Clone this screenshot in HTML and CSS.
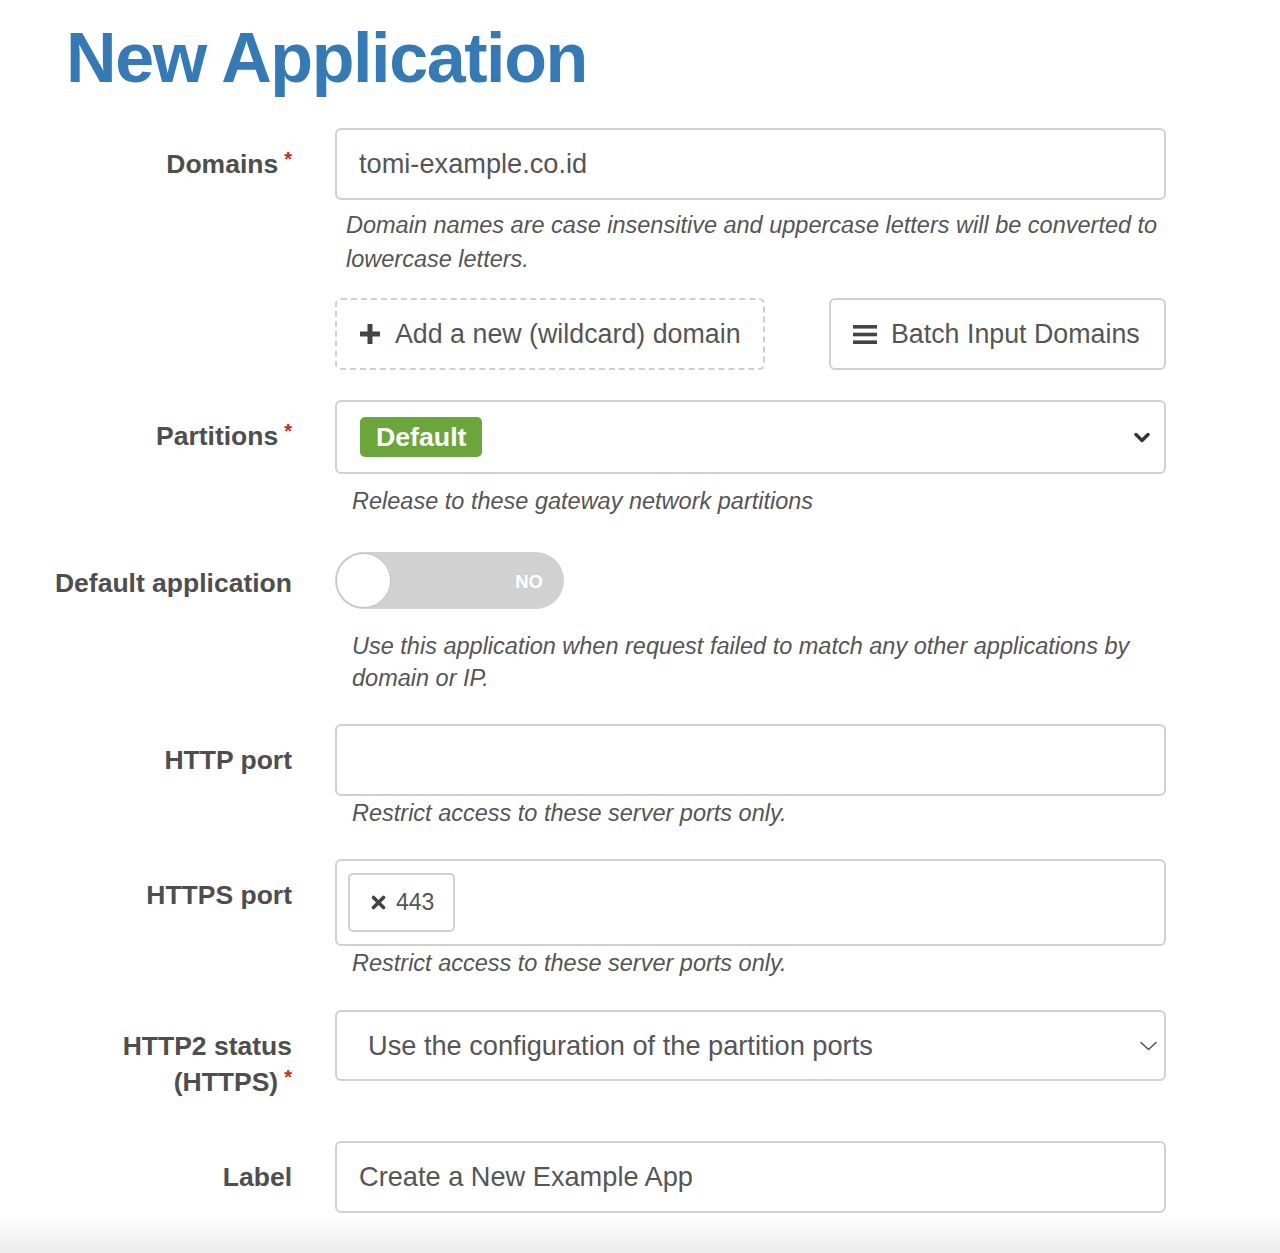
FILE: index.html
```html
<!DOCTYPE html>
<html lang="en">
<head>
<meta charset="utf-8">
<title>New Application</title>
<link rel="stylesheet" href="styles.css">
</head>
<body>
<h1 class="title">New Application</h1>
<form class="form">
  <div class="group g-domains">
    <div class="label">Domains<span class="req">*</span></div>
    <div class="control">
      <div class="input">tomi-example.co.id</div>
      <div class="help help-domain">Domain names are case insensitive and uppercase letters will be converted to lowercase letters.</div>
      <div class="btn-row">
        <div class="btn btn-add">
          <svg class="ico-plus" width="20" height="20" viewBox="0 0 20 20"><path d="M7.5 0h5v7.5H20v5h-7.5V20h-5v-7.5H0v-5h7.5z" fill="#444"/></svg>
          <span>Add a new (wildcard) domain</span>
        </div>
        <div class="btn btn-batch">
          <svg class="ico-bars" width="24" height="19" viewBox="0 0 24 19"><rect x="0" y="0" width="24" height="3.6" fill="#444"/><rect x="0" y="7.7" width="24" height="3.6" fill="#444"/><rect x="0" y="15.4" width="24" height="3.6" fill="#444"/></svg>
          <span>Batch Input Domains</span>
        </div>
      </div>
    </div>
  </div>

  <div class="group g-partitions">
    <div class="label">Partitions<span class="req">*</span></div>
    <div class="control">
      <div class="input select-part">
        <span class="badge">Default</span>
        <svg class="chev-bold" width="16" height="11" viewBox="0 0 16 11"><path d="M2 2.5l6 6 6-6" fill="none" stroke="#333" stroke-width="3.4" stroke-linecap="round" stroke-linejoin="round"/></svg>
      </div>
      <div class="help help-std help-part">Release to these gateway network partitions</div>
    </div>
  </div>

  <div class="group g-default">
    <div class="label">Default application</div>
    <div class="control">
      <div class="toggle">
        <span class="knob"></span>
        <span class="toggle-text">NO</span>
      </div>
      <div class="help help-std help-default">Use this application when request failed to match any other applications by domain or IP.</div>
    </div>
  </div>

  <div class="group g-http">
    <div class="label">HTTP port</div>
    <div class="control">
      <div class="input"></div>
      <div class="help help-std help-port">Restrict access to these server ports only.</div>
    </div>
  </div>

  <div class="group g-https">
    <div class="label">HTTPS port</div>
    <div class="control">
      <div class="input tags">
        <span class="tag">
          <svg class="ico-x" width="15" height="15" viewBox="0 0 15 15"><path d="M2.5 2.5l10 10M12.5 2.5l-10 10" stroke="#444" stroke-width="3.6" stroke-linecap="round"/></svg>
          <span>443</span>
        </span>
      </div>
      <div class="help help-std help-port">Restrict access to these server ports only.</div>
    </div>
  </div>

  <div class="group g-http2">
    <div class="label">HTTP2 status<br>(HTTPS)<span class="req">*</span></div>
    <div class="control">
      <div class="input select-h2">
        <span>Use the configuration of the partition ports</span>
        <svg class="chev-thin" width="17" height="10" viewBox="0 0 17 10"><path d="M1 1.5l7.5 7 7.5-7" fill="none" stroke="#555" stroke-width="1.6" stroke-linecap="round" stroke-linejoin="round"/></svg>
      </div>
    </div>
  </div>

  <div class="group g-label">
    <div class="label">Label</div>
    <div class="control">
      <div class="input">Create a New Example App</div>
    </div>
  </div>
</form>
<div class="bottom-shade"></div>
</body>
</html>
```

FILE: styles.css
```css
* { box-sizing: border-box; }

html, body {
  margin: 0;
  padding: 0;
  background: #fff;
}

body {
  font-family: "Liberation Sans", Arial, Helvetica, sans-serif;
  color: #555;
  width: 1280px;
  height: 1253px;
  overflow: hidden;
}

.title {
  margin: 20px 0 0 66px;
  font-size: 70px;
  line-height: 77px;
  font-weight: 700;
  letter-spacing: -1.4px;
  color: #337ab7;
}

.form {
  margin-top: 31px;
}

.group {
  display: grid;
  grid-template-columns: 292px 831px;
  column-gap: 43px;
  align-items: start;
  margin-bottom: 31px;
}

.label {
  text-align: right;
  font-weight: 700;
  font-size: 26.5px;
  line-height: 36px;
  padding-top: 18px;
  color: #4e4e4e;
}

.req {
  color: #e02020;
  font-size: 20px;
  line-height: 0;
  margin-left: 6px;
  vertical-align: 7px;
}

.input {
  height: 72px;
  border: 2px solid #d0d0d0;
  border-radius: 6px;
  background: #fff;
  padding: 0 22px;
  display: flex;
  align-items: center;
  font-size: 27.2px;
  color: #555;
}

.help {
  font-style: italic;
  font-size: 23.5px;
  color: #555;
}

.help-domain {
  line-height: 34px;
  margin-top: 8px;
  padding-left: 11px;
}

.help-std {
  line-height: 32px;
  padding-left: 17px;
  margin-top: 0;
}

.help-part { margin-top: 11px; }
.help-default { margin-top: 21px; padding-right: 16px; }
.help-port { margin-top: 1px; }

.btn-row {
  display: flex;
  justify-content: space-between;
  margin-top: 22px;
}

.btn {
  height: 72px;
  border-radius: 6px;
  display: flex;
  align-items: center;
  font-size: 26.8px;
  color: #555;
  background: #fff;
}

.btn-add {
  width: 430px;
  border: 2px dashed #cfcfcf;
  padding-left: 23px;
  gap: 15px;
}

.btn-batch {
  width: 337px;
  border: 2px solid #d0d0d0;
  padding-left: 22px;
  gap: 14px;
}

.g-domains { margin-bottom: 30px; }

.select-part {
  height: 74px;
  padding-left: 23px;
  padding-right: 14px;
  justify-content: space-between;
}

.badge {
  display: inline-flex;
  align-items: center;
  height: 40px;
  padding: 0 16px;
  border-radius: 5px;
  background: #6ba63a;
  color: #fff;
  font-weight: 700;
  font-size: 26.7px;
}

.g-partitions { margin-bottom: 35px; }

.toggle {
  width: 229px;
  height: 57px;
  border-radius: 29px;
  background: #d1d1d1;
  display: flex;
  align-items: center;
  padding: 0 21px 0 2px;
}

.knob {
  width: 53px;
  height: 53px;
  border-radius: 50%;
  background: #fff;
  box-shadow: 0 0 0 1px #c4c4c4;
}

.toggle-text {
  margin-left: auto;
  color: #fff;
  font-weight: 700;
  font-size: 18.5px;
  padding-top: 2px;
}

.g-default .label { padding-top: 13px; }
.g-default { margin-bottom: 30px; }

.g-http { margin-bottom: 30px; }

.tags {
  height: 87px;
  padding: 0 11px;
}

.tag {
  display: inline-flex;
  align-items: center;
  height: 59px;
  padding: 0 19px 0 21px;
  border: 2px solid #d0d0d0;
  border-radius: 5px;
  font-size: 23px;
  color: #555;
  gap: 10px;
}

.g-https { margin-bottom: 31px; }

.select-h2 {
  height: 71px;
  padding-left: 31px;
  padding-right: 7px;
  justify-content: space-between;
}

.g-http2 { margin-bottom: 41px; }

.bottom-shade {
  position: fixed;
  left: 0;
  right: 0;
  bottom: 0;
  height: 38px;
  background: linear-gradient(to bottom, rgba(0,0,0,0), rgba(0,0,0,0.075));
  pointer-events: none;
}
```
